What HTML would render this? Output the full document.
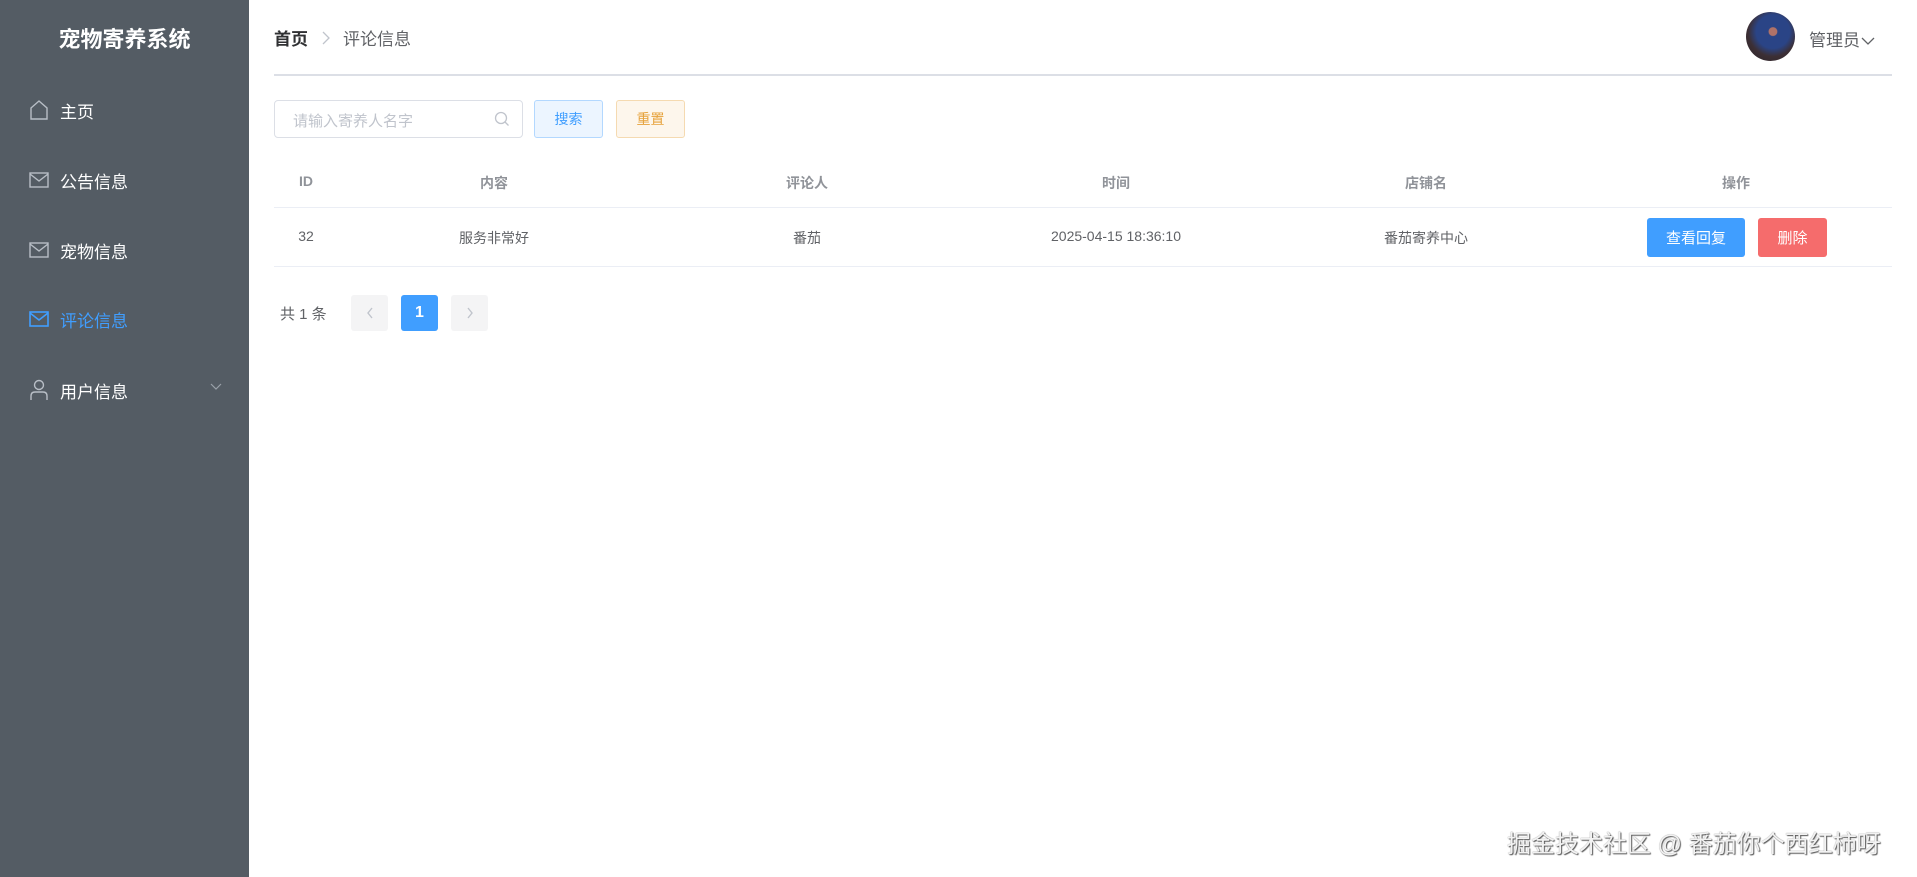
<!DOCTYPE html>
<html><head><meta charset="utf-8"><style>
*{margin:0;padding:0;box-sizing:border-box}
body{width:1917px;height:877px;position:relative;overflow:hidden;background:#fff;font-family:"Liberation Sans","Noto Sans CJK SC",sans-serif;color:#606266}
.side{position:absolute;left:0;top:0;width:249px;height:877px;background:#545c64}
.title{position:absolute;left:0;width:249px;top:22px;text-align:center;color:#fff;font-size:22px;font-weight:bold}
.mi{position:absolute;left:29px;height:30px;display:flex;align-items:center;color:#fff;font-size:17px}
.mi svg{margin-right:11px}
.mi.act{color:#409eff}
.abs{position:absolute}
.btn{position:absolute;border-radius:3px;font-size:14px;display:flex;align-items:center;justify-content:center}
.h{position:absolute;top:173px;font-size:14px;font-weight:bold;color:#909399;transform:translateX(-50%)}
.d{position:absolute;top:228px;font-size:14px;color:#606266;transform:translateX(-50%)}
</style></head><body>
<div class="side">
<div class="title">宠物寄养系统</div>
<div class="mi" style="top:95px"><svg width="20" height="22" viewBox="0 0 20 22" fill="none" stroke="#b8bec6" stroke-width="1.4"><path d="M2 9 L10 2 L18 9 V20 H2 Z"/></svg>主页</div>
<div class="mi" style="top:165px"><svg width="20" height="18" viewBox="0 0 20 18" fill="none" stroke="#b8bec6" stroke-width="1.4"><rect x="1" y="2" width="18" height="14"/><path d="M1 3 L10 10 L19 3"/></svg>公告信息</div>
<div class="mi" style="top:235px"><svg width="20" height="18" viewBox="0 0 20 18" fill="none" stroke="#b8bec6" stroke-width="1.4"><rect x="1" y="2" width="18" height="14"/><path d="M1 3 L10 10 L19 3"/></svg>宠物信息</div>
<div class="mi act" style="top:304px"><svg width="20" height="18" viewBox="0 0 20 18" fill="none" stroke="#409eff" stroke-width="1.6"><rect x="1" y="2" width="18" height="14"/><path d="M1 3 L10 10 L19 3"/></svg>评论信息</div>
<div class="mi" style="top:375px"><svg width="20" height="22" viewBox="0 0 20 22" fill="none" stroke="#b8bec6" stroke-width="1.4"><circle cx="10" cy="6" r="4.5"/><path d="M2 21 V17 Q2 13 6 13 H14 Q18 13 18 17 V21"/></svg>用户信息</div>
<svg class="abs" style="left:210px;top:383px" width="12" height="8" viewBox="0 0 12 8" fill="none" stroke="#9aa1a9" stroke-width="1.2"><path d="M1 1 L6 6 L11 1"/></svg>
</div>

<div class="abs" style="left:274px;top:25px;font-size:17px;color:#303133;display:flex;align-items:center"><b>首页</b><svg width="10" height="14" viewBox="0 0 10 14" fill="none" stroke="#c0c4cc" stroke-width="1.3" style="margin:0 12px 0 13px"><path d="M2 1 L8 7 L2 13"/></svg><span style="color:#606266">评论信息</span></div>
<div class="abs" style="left:1746px;top:12px;width:49px;height:49px;border-radius:50%;background:radial-gradient(circle at 55% 40%,#b07268 0 10%,#2a4486 12% 42%,#3c2f35 62%,#2a2226 100%)"></div>
<div class="abs" style="left:1809px;top:26px;font-size:17px;color:#606266">管理员<svg width="14" height="9" viewBox="0 0 14 9" fill="none" stroke="#606266" stroke-width="1.3" style="margin-left:1px"><path d="M1 1 L7 7 L13 1"/></svg></div>
<div class="abs" style="left:274px;top:74px;width:1618px;height:2px;background:#dcdfe6"></div>

<div class="abs" style="left:274px;top:100px;width:249px;height:38px;border:1px solid #dcdfe6;border-radius:4px"></div>
<div class="abs" style="left:293px;top:110px;font-size:15px;color:#c0c4cc">请输入寄养人名字</div>
<svg class="abs" style="left:494px;top:111px" width="16" height="16" viewBox="0 0 16 16" fill="none" stroke="#c0c4cc" stroke-width="1.3"><circle cx="7" cy="7" r="5.5"/><path d="M11 11 L14.5 14.5"/></svg>
<div class="btn" style="left:534px;top:100px;width:69px;height:38px;background:#ecf5ff;border:1px solid #b3d8ff;color:#409eff">搜索</div>
<div class="btn" style="left:616px;top:100px;width:69px;height:38px;background:#fdf6ec;border:1px solid #f5dab1;color:#e6a23c">重置</div>

<div class="h" style="left:306px">ID</div>
<div class="h" style="left:494px">内容</div>
<div class="h" style="left:807px">评论人</div>
<div class="h" style="left:1116px">时间</div>
<div class="h" style="left:1426px">店铺名</div>
<div class="h" style="left:1736px">操作</div>
<div class="abs" style="left:274px;top:207px;width:1618px;height:1px;background:#ebeef5"></div>
<div class="d" style="left:306px">32</div>
<div class="d" style="left:494px">服务非常好</div>
<div class="d" style="left:807px">番茄</div>
<div class="d" style="left:1116px">2025-04-15 18:36:10</div>
<div class="d" style="left:1426px">番茄寄养中心</div>
<div class="btn" style="left:1647px;top:218px;width:98px;height:39px;background:#409eff;color:#fff;font-size:15px">查看回复</div>
<div class="btn" style="left:1758px;top:218px;width:69px;height:39px;background:#f56c6c;color:#fff;font-size:15px">删除</div>
<div class="abs" style="left:274px;top:266px;width:1618px;height:1px;background:#ebeef5"></div>

<div class="abs" style="left:280px;top:303px;font-size:15px;color:#606266">共 1 条</div>
<div class="btn" style="left:351px;top:295px;width:37px;height:36px;background:#f4f4f5"><svg width="8" height="12" viewBox="0 0 8 12" fill="none" stroke="#c0c4cc" stroke-width="1.4"><path d="M6 1 L2 6 L6 11"/></svg></div>
<div class="btn" style="left:401px;top:295px;width:37px;height:36px;background:#409eff;color:#fff;font-weight:bold;font-size:16px">1</div>
<div class="btn" style="left:451px;top:295px;width:37px;height:36px;background:#f4f4f5"><svg width="8" height="12" viewBox="0 0 8 12" fill="none" stroke="#c0c4cc" stroke-width="1.4"><path d="M2 1 L6 6 L2 11"/></svg></div>

<div class="abs" style="left:1507px;top:824px;font-size:24px;color:#f2f2f2;text-shadow:1px 1px 1px #555,0 0 1px #777;white-space:nowrap">掘金技术社区 @ 番茄你个西红柿呀</div>
</body></html>
